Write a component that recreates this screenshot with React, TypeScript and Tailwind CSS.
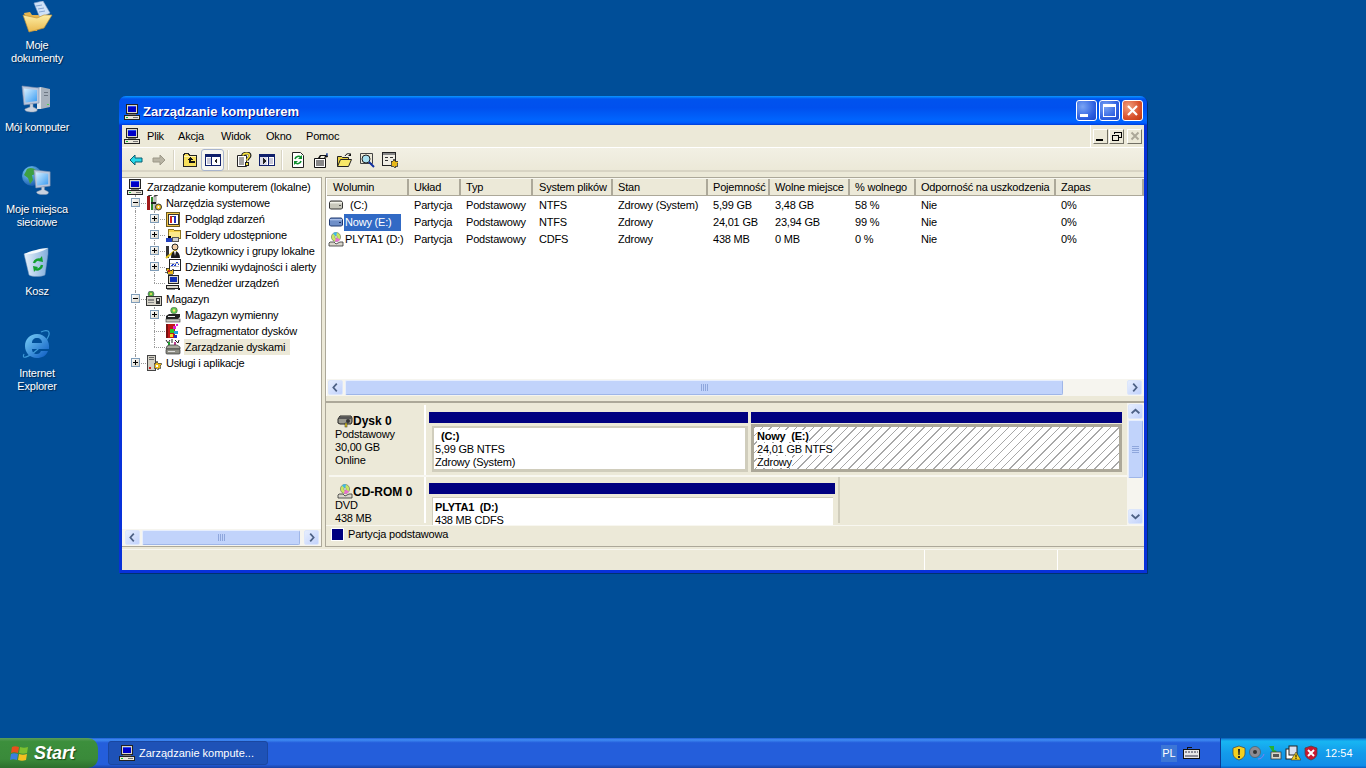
import React from 'react';

const Svg: React.FC<{ size?: number; box?: number; children: React.ReactNode; crisp?: boolean }> = ({ size = 16, box = 16, children, crisp }) => (
  <svg width={size} height={size} viewBox={`0 0 ${box} ${box}`} className="shrink-0" shapeRendering={crisp ? 'crispEdges' : undefined}>{children}</svg>
);

/* ---------- small 16px icons ---------- */
const ComputerIcon = () => (
  <Svg crisp>
    <rect x="2.5" y="0.5" width="11" height="9" fill="#d9d6cb" stroke="#222" />
    <rect x="4" y="2" width="8" height="6" fill="#0000c8" />
    <rect x="4" y="2" width="8" height="1" fill="#2b4cf0" />
    <rect x="4" y="10" width="8" height="1" fill="#777" />
    <rect x="0.5" y="11.5" width="15" height="4" fill="#e9e6da" stroke="#222" />
    <rect x="2" y="13" width="2" height="1" fill="#10c030" />
    <rect x="9" y="13" width="5" height="1" fill="#777" />
  </Svg>
);
const ToolsIcon = () => (
  <Svg>
    <rect x="1" y="1" width="3" height="14" fill="#a01818" />
    <rect x="5" y="2" width="2" height="13" fill="#2a8a2a" />
    <rect x="8" y="1" width="2" height="14" fill="#e8e8e8" stroke="#333" strokeWidth="0.5" />
    <path d="M2 1L6 0M8 1l4-1" stroke="#222" />
    <circle cx="12.5" cy="12" r="3" fill="#f0c020" stroke="#333" />
    <circle cx="12.5" cy="12" r="1" fill="#fff" />
    <rect x="5" y="7" width="5" height="2" fill="#222" />
  </Svg>
);
const EventIcon = () => (
  <Svg crisp>
    <rect x="1.5" y="1.5" width="13" height="14" fill="#f3c64a" stroke="#6b5a20" />
    <rect x="3.5" y="3.5" width="10" height="10" fill="#fff" stroke="#333" />
    <rect x="5" y="5" width="2" height="7" fill="#d02020" />
    <rect x="9" y="5" width="2" height="7" fill="#2030c0" />
    <rect x="7" y="5" width="2" height="1" fill="#444" />
  </Svg>
);
const SharedFolderIcon = () => (
  <Svg crisp>
    <path d="M3 2h5l1 1h6v8H3z" fill="#f4d24d" stroke="#8a7320" />
    <rect x="4" y="5" width="11" height="6" fill="#fbe88c" />
    <rect x="1" y="11" width="6" height="4" fill="#2040c0" />
    <rect x="7" y="10" width="6" height="4" fill="#d0d0d0" stroke="#555" />
    <rect x="3" y="9" width="3" height="2" fill="#000" />
  </Svg>
);
const UsersIcon = () => (
  <Svg>
    <rect x="1" y="3" width="3" height="12" fill="#333" />
    <path d="M1 15L12 6" stroke="#e8c820" strokeWidth="2" />
    <circle cx="10" cy="4" r="3" fill="#f2cfa8" stroke="#222" />
    <path d="M6 15c0-5 2-7 4-7s5 2 5 7z" fill="#1b1b1b" />
    <path d="M9 8l1 5 1-5z" fill="#fff" />
  </Svg>
);
const PerfIcon = () => (
  <Svg crisp>
    <rect x="4.5" y="0.5" width="11" height="11" fill="#fff" stroke="#222" />
    <path d="M6 8l2-3 2 2 2-4 2 3" fill="none" stroke="#2040d0" />
    <path d="M5 4h9M5 7h9" stroke="#bbb" />
    <path d="M0 13h3M1 9h3l2 3 2-2v5H3z" fill="#e8b818" stroke="#222" strokeWidth="0.7" />
    <circle cx="4" cy="12" r="1" fill="#d02020" />
  </Svg>
);
const DevMgrIcon = () => (
  <Svg crisp>
    <rect x="3.5" y="0.5" width="10" height="8" fill="#d9d6cb" stroke="#222" />
    <rect x="5" y="2" width="7" height="5" fill="#1030b8" />
    <rect x="1.5" y="10.5" width="12" height="3" fill="#d9d6cb" stroke="#222" />
    <path d="M13 13l2 2" stroke="#222" strokeWidth="2" />
    <rect x="2" y="14" width="8" height="1" fill="#888" />
  </Svg>
);
const StorageIcon = () => (
  <Svg>
    <circle cx="5" cy="3" r="3" fill="#58b040" stroke="#557" strokeWidth="0.6" />
    <circle cx="5" cy="3" r="1" fill="#f4e060" />
    <rect x="0.5" y="5.5" width="15" height="9" fill="#d8d5ca" stroke="#333" />
    <rect x="2" y="8" width="6" height="2" fill="#888" />
    <rect x="10" y="7" width="4" height="6" fill="#333" />
    <rect x="11" y="8" width="2" height="2" fill="#ddd" />
    <rect x="2" y="11" width="6" height="1" fill="#888" />
  </Svg>
);
const RemovableIcon = () => (
  <Svg>
    <circle cx="9" cy="3.5" r="3.3" fill="#60c850" stroke="#444" strokeWidth="0.5" />
    <circle cx="9" cy="3.5" r="1.2" fill="#f8e060" />
    <path d="M1 9l3-2h11v3l-2 2H1z" fill="#222" />
    <rect x="1" y="12" width="14" height="3" fill="#c8c8c0" stroke="#333" strokeWidth="0.6" />
    <rect x="3" y="9" width="7" height="1" fill="#eee" />
  </Svg>
);
const DefragIcon = () => (
  <Svg crisp>
    <rect x="1" y="1" width="9" height="14" fill="#c01818" />
    <rect x="1" y="1" width="2" height="14" fill="#781010" />
    <rect x="8" y="3" width="3" height="3" fill="#e020d0" />
    <rect x="11" y="1" width="2" height="2" fill="#e020d0" />
    <rect x="5" y="6" width="4" height="4" fill="#28c828" />
    <rect x="9" y="8" width="4" height="3" fill="#20a0e0" />
    <rect x="5" y="11" width="3" height="3" fill="#f0e020" />
    <rect x="9" y="12" width="3" height="3" fill="#2030c0" />
  </Svg>
);
const DiskMgmtIcon = () => (
  <Svg>
    <path d="M1 1l2 3 2-3M7 0v4M10 1l3 3M14 1l-1 3" stroke="#222" fill="none" />
    <rect x="3" y="3" width="2" height="3" fill="#20a030" />
    <rect x="9" y="3" width="2" height="3" fill="#c04090" />
    <path d="M2 7l3-1h7l3 2v2H1z" fill="#a8a89c" stroke="#333" strokeWidth="0.7" />
    <rect x="1" y="10" width="14" height="5" rx="1" fill="#8e8e84" stroke="#333" strokeWidth="0.7" />
    <rect x="3" y="12" width="7" height="1" fill="#ddd" />
  </Svg>
);
const ServicesIcon = () => (
  <Svg crisp>
    <rect x="1.5" y="0.5" width="8" height="15" fill="#d5d2c6" stroke="#444" />
    <rect x="3" y="2" width="5" height="1" fill="#666" />
    <rect x="3" y="4" width="5" height="1" fill="#666" />
    <rect x="3" y="12" width="2" height="2" fill="#d02020" />
    <path d="M8 8h2l1-2 1 2h3v2l-1 1 1 2h-2l-1 2-2-2H8l1-2z" fill="#e8b818" stroke="#444" strokeWidth="0.7" />
    <circle cx="11" cy="11" r="1" fill="#fff" />
  </Svg>
);
const DriveIcon: React.FC<{ selected?: boolean }> = ({ selected }) => (
  <Svg>
    <path d="M1.5 5l1-2h11l1 2v5l-1 1h-11l-1-1z" fill={selected ? '#6f8fc8' : '#c8c8bc'} stroke={selected ? '#203a70' : '#333'} />
    <rect x="2" y="4" width="12" height="1.4" fill={selected ? '#a7bde8' : '#f2f2ea'} />
    <rect x="11" y="7" width="2" height="1" fill={selected ? '#1c2f60' : '#555'} />
  </Svg>
);
const CdIcon = () => (
  <Svg>
    <circle cx="8" cy="5" r="4.6" fill="#c8e860" stroke="#666" strokeWidth="0.6" />
    <path d="M8 5L5 1.5A4.6 4.6 0 0 1 9 .5z" fill="#40b8e8" />
    <path d="M8 5l4 2.5A4.6 4.6 0 0 1 7 9.5z" fill="#e86fd0" />
    <circle cx="8" cy="5" r="1.2" fill="#fff" stroke="#666" strokeWidth="0.5" />
    <path d="M2 10h4l2 2 4-2h3v4H1v-3z" fill="#d8d5ca" stroke="#333" strokeWidth="0.8" />
  </Svg>
);
const HddBlackIcon = () => (
  <Svg>
    <path d="M1 6l2-3h11l1 2v4l-1 2H3l-2-1z" fill="#9a9a90" stroke="#222" />
    <rect x="2" y="4" width="12" height="2" fill="#555" />
    <circle cx="11" cy="8" r="2" fill="#333" />
    <rect x="8" y="10" width="2" height="4" fill="#e8d020" stroke="#222" strokeWidth="0.5" />
  </Svg>
);

/* ---------- toolbar icons ---------- */
const ArrowIcon: React.FC<{ dir: 'l' | 'r'; fill: string; stroke: string }> = ({ dir, fill, stroke }) => (
  <Svg size={14} box={14}>
    <path d={dir === 'l' ? 'M1 7l5-5v3h7v4H6v3z' : 'M13 7L8 2v3H1v4h7v3z'} fill={fill} stroke={stroke} />
  </Svg>
);
const UpFolderIcon = () => (
  <Svg crisp>
    <path d="M1.5 3.5l1-2h4l1 2h7v11h-13z" fill="#f7e05c" stroke="#222" />
    <path d="M8 5L5 8h2v3h6V9H9V8h2z" fill="#111" />
    <rect x="2" y="4" width="12" height="1" fill="#fdf3b0" />
  </Svg>
);
const TreeToggleIcon: React.FC<{ right?: boolean }> = ({ right }) => (
  <Svg crisp>
    <rect x="0.5" y="2.5" width="15" height="11" fill="#fff" stroke="#10206c" />
    <rect x="1" y="3" width="14" height="2" fill="#10206c" />
    <rect x={right ? 9 : 6} y="5" width="1" height="8" fill="#10206c" />
    <path d={right ? 'M4 6l3 3-3 3z' : 'M12 6l-3 3 3 3z'} fill="#222" />
    <rect x={right ? 10 : 2} y="6" width="4" height="6" fill="#c8c8d8" />
    {right && <rect x="1" y="5" width="7" height="8" fill="#dcdce8" />}
    {right && <path d="M4 6l3 3-3 3z" fill="#222" />}
  </Svg>
);
const HelpDocIcon = () => (
  <Svg>
    <path d="M1.5 3.5h9v11h-9z" fill="#fff" stroke="#222" />
    <path d="M3 6h5M3 8h5M3 10h5M3 12h5" stroke="#444" />
    <path d="M6.5 3.5C7 1 14-.5 14 3.5c0 2.2-2.7 2.4-2.7 5" fill="none" stroke="#222" strokeWidth="3" />
    <path d="M6.8 3.5C7.5 1.3 13.5 0 13.5 3.5c0 2.2-2.7 2.4-2.7 5" fill="none" stroke="#f6e23c" strokeWidth="1.6" />
    <rect x="9.5" y="10.5" width="3" height="3" fill="#f6e23c" stroke="#222" />
  </Svg>
);
const RefreshDocIcon = () => (
  <Svg>
    <path d="M2.5 0.5h8l3 3v12h-11z" fill="#fff" stroke="#222" />
    <path d="M5 7a3.5 3.5 0 0 1 6-1.5M11 9a3.5 3.5 0 0 1-6 1.5" fill="none" stroke="#109030" strokeWidth="1.6" />
    <path d="M12 3v4H8zM4 13V9h4z" fill="#109030" />
  </Svg>
);
const ExportIcon = () => (
  <Svg>
    <path d="M1.5 6.5h11v9h-11z" fill="#fff" stroke="#111" />
    <path d="M3 9h8M3 11h8M3 13h8" stroke="#111" />
    <path d="M5 6l2-3h6l1-2 1 4-4 1 1-2H8L7 6z" fill="#111" />
    <path d="M14 1v3" stroke="#2050c0" />
  </Svg>
);
const OpenFolderIcon = () => (
  <Svg>
    <path d="M1.5 14.5v-10h4l1 1h6v2" fill="#e8d040" stroke="#222" />
    <path d="M1.5 14.5l3-7h11l-3 7z" fill="#f8e868" stroke="#222" />
    <path d="M9 4c1-2 3-3 5-2" fill="none" stroke="#111" />
    <path d="M15 1v3h-3z" fill="#111" />
  </Svg>
);
const SearchDocIcon = () => (
  <Svg>
    <path d="M1.5 1.5h12v10h-12z" fill="#ece9d8" stroke="#444" />
    <circle cx="7" cy="7" r="4" fill="#a8e0f0" stroke="#222" />
    <path d="M10 10l5 5" stroke="#1030a0" strokeWidth="2" />
  </Svg>
);
const SettingsIcon = () => (
  <Svg crisp>
    <rect x="0.5" y="0.5" width="13" height="13" fill="#f0eee4" stroke="#222" />
    <rect x="1" y="1" width="12" height="2" fill="#888" />
    <path d="M3 5h3v1H3zM8 5h3v1H8zM3 8h3v1H3z" fill="#333" />
    <path d="M9 9h2l1-2 1 2h3v2l-1 1 1 2h-2l-1 2-2-2H9l1-2-1-1z" fill="#e8b818" stroke="#333" strokeWidth="0.8" />
  </Svg>
);

/* ---------- desktop icons ---------- */
const DocsDesktopIcon = () => (
  <Svg size={32} box={32}>
    <defs>
      <linearGradient id="fold" x1="0" y1="0" x2="0" y2="1"><stop offset="0" stopColor="#fdeea4" /><stop offset="1" stopColor="#eab84e" /></linearGradient>
    </defs>
    <path d="M3 12l6-1 2 3h9l-4 16H8z" fill="#e5b54e" />
    <path d="M13 2l9-2 7 12-10 5z" fill="#cfe2f8" stroke="#8aa6cc" strokeWidth="0.6" />
    <path d="M15 5l6-1M17 8l6-1M18 11l6-1" stroke="#86a6d2" />
    <path d="M8 31L2 14l14 3 7-3 8 0-8 13z" fill="url(#fold)" stroke="#c09238" strokeWidth="0.7" />
  </Svg>
);
const MonitorShape: React.FC<{ id: string; x?: number; y?: number }> = ({ id, x = 0, y = 0 }) => (
  <g transform={`translate(${x} ${y})`}>
    <defs>
      <linearGradient id={id} x1="0" y1="0" x2="1" y2="1"><stop offset="0" stopColor="#d8f0ff" /><stop offset="1" stopColor="#3a9cf2" /></linearGradient>
    </defs>
    <path d="M1 2l17 2v15L3 21z" fill="#b9c6dc" stroke="#7d8fae" strokeWidth="0.6" />
    <path d="M3 4.5l13 1.5v11L4.5 18.5z" fill={`url(#${id})`} />
    <path d="M9 20v3l-5 2c-1 2 3 3 7 3s6-1 5-3l-4-2v-3z" fill="#c9d2df" stroke="#8a96aa" strokeWidth="0.5" />
  </g>
);
const MyComputerIcon = () => (
  <Svg size={32} box={32}>
    <path d="M20 4l9 2v18l-9 2z" fill="#a8b2bd" />
    <path d="M20 4l-4 1 0 21 4 0z" fill="#dfe4ea" />
    <rect x="23" y="9" width="4" height="1" fill="#6e7884" />
    <rect x="23" y="12" width="4" height="1" fill="#6e7884" />
    <rect x="26" y="21" width="2" height="1" fill="#50d050" />
    <MonitorShape id="mon1" x={0} y={1} />
  </Svg>
);
const NetworkIcon = () => (
  <Svg size={32} box={32}>
    <defs>
      <radialGradient id="globe" cx="0.35" cy="0.3" r="0.8"><stop offset="0" stopColor="#7ed0f8" /><stop offset="1" stopColor="#0e4fa8" /></radialGradient>
    </defs>
    <circle cx="11" cy="11" r="10" fill="url(#globe)" />
    <path d="M6 4c3-2 7-1 9 1 1 3-2 5-4 5l1 5-3 4-2-6-4-3z" fill="#3ea042" />
    <g transform="translate(12 3) scale(0.95)"><MonitorShape id="mon2" /></g>
  </Svg>
);
const BinIcon = () => (
  <Svg size={32} box={32}>
    <defs>
      <linearGradient id="bin" x1="0" y1="0" x2="1" y2="0"><stop offset="0" stopColor="#e8f2fc" /><stop offset="1" stopColor="#82aedc" /></linearGradient>
    </defs>
    <path d="M3 7l24-6 0 6-3 21c-4 2-13 2-16 0z" fill="url(#bin)" stroke="#6d90b8" strokeWidth="0.5" />
    <path d="M3 7c6-3 18-6 24-6-6 4-18 7-24 6z" fill="#f5fafe" />
    <path d="M13 16a5 5 0 0 1 7-3M21 18a5 5 0 0 1-7 4" fill="none" stroke="#12a030" strokeWidth="2.4" />
    <path d="M21 9l1 6-5-1zM13 25l-1-6 5 1z" fill="#12a030" />
  </Svg>
);
const IeIcon = () => (
  <Svg size={32} box={32}>
    <defs>
      <linearGradient id="ie" x1="0" y1="0" x2="1" y2="1"><stop offset="0" stopColor="#7ad0f8" /><stop offset="1" stopColor="#0a58c0" /></linearGradient>
    </defs>
    <path d="M3 25C0 31 8 28 16 21 24 14 31 5 27 2c-2-1-5 0-7 1" fill="none" stroke="#3d9ad8" strokeWidth="1.2" />
    <path d="M16 5C9 5 4 10 4 17s5 12 12 12c5 0 9-2 11-7h-7c-1 2-2 3-4 3-3 0-5-2-5-5h17c1-8-4-15-12-15zm-5 9c0-3 2-5 5-5s5 2 5 5z" fill="url(#ie)" fillRule="evenodd" />
  </Svg>
);
const DesktopIcon: React.FC<{ icon: React.ReactNode; label: string[]; top: string }> = ({ icon, label, top }) => (
  <div className={`absolute left-0 w-[74px] flex flex-col items-center ${top}`}>
    {icon}
    <div className="mt-[6px] text-center text-white text-[11px] leading-[13px] [text-shadow:1px_1px_1px_#00244a] whitespace-nowrap">
      {label.map((l) => <div key={l}>{l}</div>)}
    </div>
  </div>
);

/* ---------- window parts ---------- */
const CaptionBtn: React.FC<{ kind: 'min' | 'max' | 'close' }> = ({ kind }) => (
  <div className={`w-[21px] h-[21px] rounded-[3px] border border-white flex items-center justify-center ${kind === 'close' ? 'bg-[radial-gradient(circle_at_30%_30%,#f0a080,#d8502c_60%,#c03810)]' : 'bg-[radial-gradient(circle_at_30%_30%,#7aa4f4,#2c5ee0_65%,#1a46c8)]'}`}>
    {kind === 'min' && <div className="w-[8px] h-[3px] bg-white mt-[9px] -ml-[5px]" />}
    {kind === 'max' && <div className="w-[13px] h-[13px] border border-white border-t-[3px]" />}
    {kind === 'close' && (
      <svg width="13" height="13" viewBox="0 0 13 13"><path d="M2 2l9 9M11 2l-9 9" stroke="#fff" strokeWidth="2.2" /></svg>
    )}
  </div>
);
const MdiBtn: React.FC<{ children: React.ReactNode }> = ({ children }) => (
  <div className="w-[15px] h-[15px] flex items-center justify-center border border-b-[#716f64] border-r-[#716f64] border-t-white border-l-white bg-[#ece9d8]">{children}</div>
);
const MenuItem: React.FC<{ label: string; w: string }> = ({ label, w }) => <span className={`${w} shrink-0`}>{label}</span>;
const ToolBtn: React.FC<{ children: React.ReactNode; active?: boolean }> = ({ children, active }) => (
  <div className={`w-[23px] h-[22px] flex items-center justify-center ${active ? 'bg-[#f7f6f0] border border-[#a8b4cc] rounded-[3px]' : ''}`}>{children}</div>
);
const ToolSep = () => (
  <div className="w-[8px] h-[20px] flex justify-center"><div className="w-[2px] h-full bg-[#d8d4c4] border-r border-white" /></div>
);

const ScrollBtn: React.FC<{ dir: 'l' | 'r' | 'u' | 'd' }> = ({ dir }) => {
  const d = { l: 'M9 3L5 7.5 9 12', r: 'M6 3l4 4.5L6 12', u: 'M3 9.5l4.5-4 4.5 4', d: 'M3 5.5l4.5 4 4.5-4' }[dir];
  return (
    <div className="w-[15px] h-[15px] shrink-0 rounded-[2px] border border-[#dce6fb] bg-[linear-gradient(135deg,#e6eefe,#c2d2fb)] flex items-center justify-center">
      <svg width="15" height="15" viewBox="0 0 15 15"><path d={d} fill="none" stroke="#4d6185" strokeWidth="2" /></svg>
    </div>
  );
};
const HThumbGrip = () => (
  <div className="flex gap-[1px]">
    {[0, 1, 2, 3].map((i) => <div key={i} className="w-[1px] h-[7px] bg-[#8ea6dc]" />)}
  </div>
);
const HScroll: React.FC<{ thumb: string; gap: string; left: string }> = ({ thumb, gap, left }) => (
  <div className={`h-[17px] flex items-center bg-[#f6f5ef] pr-[2px] shrink-0 ${left}`}>
    <ScrollBtn dir="l" />
    <div className={`${thumb} ml-[2px] h-[15px] rounded-[2px] border border-[#e6eefe] border-r-[#9fb6e8] border-b-[#9fb6e8] bg-[#c1d3fb] flex items-center justify-center`}><HThumbGrip /></div>
    <div className={gap} />
    <ScrollBtn dir="r" />
  </div>
);

/* ---------- tree ---------- */
type TreeNode = { label: string; icon: React.ReactNode; level: number; box?: '+' | '-'; last?: boolean; selected?: boolean };
const treeNodes: TreeNode[] = [
  { label: 'Zarządzanie komputerem (lokalne)', icon: <ComputerIcon />, level: 0 },
  { label: 'Narzędzia systemowe', icon: <ToolsIcon />, level: 1, box: '-' },
  { label: 'Podgląd zdarzeń', icon: <EventIcon />, level: 2, box: '+' },
  { label: 'Foldery udostępnione', icon: <SharedFolderIcon />, level: 2, box: '+' },
  { label: 'Użytkownicy i grupy lokalne', icon: <UsersIcon />, level: 2, box: '+' },
  { label: 'Dzienniki wydajności i alerty', icon: <PerfIcon />, level: 2, box: '+' },
  { label: 'Menedżer urządzeń', icon: <DevMgrIcon />, level: 2, last: true },
  { label: 'Magazyn', icon: <StorageIcon />, level: 1, box: '-' },
  { label: 'Magazyn wymienny', icon: <RemovableIcon />, level: 2, box: '+' },
  { label: 'Defragmentator dysków', icon: <DefragIcon />, level: 2 },
  { label: 'Zarządzanie dyskami', icon: <DiskMgmtIcon />, level: 2, last: true, selected: true },
  { label: 'Usługi i aplikacje', icon: <ServicesIcon />, level: 1, box: '+', last: true },
];

const ExpandBox: React.FC<{ sign: '+' | '-' }> = ({ sign }) => (
  <div className="absolute left-[4px] top-[3px] w-[9px] h-[9px] border border-[#7f9db9] bg-[linear-gradient(135deg,#ffffff,#d8d4c8)] flex items-center justify-center">
    <div className="relative w-[5px] h-[5px]">
      <div className="absolute left-0 top-[2px] w-[5px] h-[1px] bg-black" />
      {sign === '+' && <div className="absolute left-[2px] top-0 w-[1px] h-[5px] bg-black" />}
    </div>
  </div>
);

const TreeRow: React.FC<{ node: TreeNode }> = ({ node }) => (
  <div className="h-[16px] flex items-center whitespace-nowrap">
    {node.level === 2 && (
      <div className="relative w-[19px] h-[16px] shrink-0"><div className="absolute left-[8px] top-0 h-[16px] border-l border-dotted border-[#9a9a9a]" /></div>
    )}
    {node.level > 0 && (
      <div className="relative w-[19px] h-[16px] shrink-0">
        <div className={`absolute left-[8px] top-0 border-l border-dotted border-[#9a9a9a] ${node.last ? 'h-[8px]' : 'h-[16px]'}`} />
        <div className="absolute left-[8px] top-[8px] w-[11px] border-t border-dotted border-[#9a9a9a]" />
        {node.box && <ExpandBox sign={node.box} />}
      </div>
    )}
    <div className="w-[16px] h-[16px] shrink-0">{node.icon}</div>
    <span className={`ml-[3px] h-[16px] pl-[1px] leading-[16px] ${node.selected ? 'bg-[#ece9d8] pr-[5px]' : 'pr-[1px]'}`}>{node.label}</span>
  </div>
);

/* ---------- volume list ---------- */
const columns = [
  { label: 'Wolumin', w: 'w-[81px]', pad: 'pl-[5px]' },
  { label: 'Układ', w: 'w-[52px]', pad: 'pl-[5px]' },
  { label: 'Typ', w: 'w-[72px]', pad: 'pl-[5px]' },
  { label: 'System plików', w: 'w-[80px]', pad: 'pl-[6px]' },
  { label: 'Stan', w: 'w-[95px]', pad: 'pl-[5px]' },
  { label: 'Pojemność', w: 'w-[62px]', pad: 'pl-[5px]' },
  { label: 'Wolne miejsce', w: 'w-[80px]', pad: 'pl-[5px]' },
  { label: '% wolnego', w: 'w-[66px]', pad: 'pl-[5px]' },
  { label: 'Odporność na uszkodzenia', w: 'w-[140px]', pad: 'pl-[5px]' },
  { label: 'Zapas', w: 'flex-1', pad: 'pl-[5px]' },
];
const rows = [
  ['Partycja', 'Podstawowy', 'NTFS', 'Zdrowy (System)', '5,99 GB', '3,48 GB', '58 %', 'Nie', '0%'],
  ['Partycja', 'Podstawowy', 'NTFS', 'Zdrowy', '24,01 GB', '23,94 GB', '99 %', 'Nie', '0%'],
  ['Partycja', 'Podstawowy', 'CDFS', 'Zdrowy', '438 MB', '0 MB', '0 %', 'Nie', '0%'],
];
const volumes: { icon: React.ReactNode; name: string; selected?: boolean; indent?: boolean }[] = [
  { icon: <DriveIcon />, name: '(C:)', indent: true },
  { icon: <DriveIcon selected />, name: 'Nowy (E:)', selected: true },
  { icon: <CdIcon />, name: 'PLYTA1 (D:)' },
];

const PartitionHead: React.FC<{ w: string; children: React.ReactNode }> = ({ w, children }) => (
  <div className={`${w} flex flex-col h-[70px] shrink-0 pt-[7px]`}>
    <div className="h-[11px] bg-[#000080]" />
    {children}
  </div>
);

export default function App() {
  return (
    <div className="relative w-[1366px] h-[768px] overflow-hidden flex flex-col bg-[#004e98] font-['Liberation_Sans','Noto_Sans_CJK_SC',sans-serif] text-[11px] leading-[13px] tracking-[-0.2px] text-black">
      <div className="relative flex-1">
        <DesktopIcon top="top-[1px]" icon={<DocsDesktopIcon />} label={['Moje', 'dokumenty']} />
        <DesktopIcon top="top-[83px]" icon={<MyComputerIcon />} label={['Mój komputer']} />
        <DesktopIcon top="top-[165px]" icon={<NetworkIcon />} label={['Moje miejsca', 'sieciowe']} />
        <DesktopIcon top="top-[247px]" icon={<BinIcon />} label={['Kosz']} />
        <DesktopIcon top="top-[329px]" icon={<IeIcon />} label={['Internet', 'Explorer']} />

        {/* window */}
        <div className="absolute left-[119px] top-[96px] w-[1028px] h-[477px] flex flex-col rounded-t-[7px] bg-[#0831d9] px-[3px] pb-[3px] shadow-[1px_1px_0_#003070]">
          <div className="-mx-[3px] h-[29px] shrink-0 rounded-t-[7px] flex items-center pl-[5px] pr-[4px] bg-[linear-gradient(180deg,#0997ff_0%,#0053ee_10%,#0050ee_40%,#0066ff_85%,#005bff_93%,#003dd7_100%)]">
            <div className="mt-[3px] flex items-center">
              <ComputerIcon />
              <span className="ml-[3px] text-white font-bold text-[13px] leading-[16px] tracking-normal [text-shadow:1px_1px_0_#0f1089]">Zarządzanie komputerem</span>
            </div>
            <div className="ml-auto flex gap-[2px]">
              <CaptionBtn kind="min" />
              <CaptionBtn kind="max" />
              <CaptionBtn kind="close" />
            </div>
          </div>

          <div className="flex-1 flex flex-col bg-[#ece9d8] min-h-0">
            {/* menu bar */}
            <div className="h-[23px] shrink-0 flex items-center pl-[2px] border-b border-white">
              <ComputerIcon />
              <div className="ml-[7px] flex">
                <MenuItem label="Plik" w="w-[31px]" />
                <MenuItem label="Akcja" w="w-[43px]" />
                <MenuItem label="Widok" w="w-[45px]" />
                <MenuItem label="Okno" w="w-[40px]" />
                <MenuItem label="Pomoc" w="w-[40px]" />
              </div>
              <div className="ml-auto h-full flex items-center border-l border-white pl-[2px] pr-[2px]">
                <MdiBtn><div className="w-[7px] h-[2px] bg-black mt-[7px] -ml-[2px]" /></MdiBtn>
                <div className="w-[1px]" />
                <MdiBtn>
                  <svg width="11" height="11" viewBox="0 0 11 11" shapeRendering="crispEdges"><path d="M3 1.5h7v5H8M3 1.5V3M1.5 4.5h6v5h-6z" fill="none" stroke="#000" /><path d="M3 1h7v1H3zM1 4h7v1H1z" /></svg>
                </MdiBtn>
                <div className="w-[3px]" />
                <MdiBtn>
                  <svg width="10" height="10" viewBox="0 0 10 10"><path d="M1.5 1.5l7 7M8.5 1.5l-7 7" stroke="#aca899" strokeWidth="2" /></svg>
                </MdiBtn>
              </div>
            </div>

            {/* toolbar */}
            <div className="h-[24px] shrink-0 flex items-center pl-[2px] pt-[2px] border-b-2 border-[#d8d4c4] bg-[linear-gradient(180deg,#f2f0e4,#ece9d8)]">
              <ToolBtn><ArrowIcon dir="l" fill="#28d8e8" stroke="#0a5f70" /></ToolBtn>
              <ToolBtn><ArrowIcon dir="r" fill="#b8b4a4" stroke="#9c9888" /></ToolBtn>
              <ToolSep />
              <ToolBtn><UpFolderIcon /></ToolBtn>
              <ToolBtn active><TreeToggleIcon /></ToolBtn>
              <ToolSep />
              <ToolBtn><HelpDocIcon /></ToolBtn>
              <ToolBtn><TreeToggleIcon right /></ToolBtn>
              <ToolSep />
              <ToolBtn><RefreshDocIcon /></ToolBtn>
              <ToolBtn><ExportIcon /></ToolBtn>
              <ToolBtn><OpenFolderIcon /></ToolBtn>
              <ToolBtn><SearchDocIcon /></ToolBtn>
              <ToolBtn><SettingsIcon /></ToolBtn>
            </div>

            {/* content */}
            <div className="mt-[5px] h-[370px] shrink-0 flex gap-[3px]">
              <div className="w-[200px] shrink-0 flex flex-col bg-white border-t border-r border-b border-[#aca899]">
                <div className="flex-1 pl-[5px] pt-[1px] overflow-hidden">
                  {treeNodes.map((n) => <TreeRow key={n.label} node={n} />)}
                </div>
                <HScroll left="pl-[3px]" thumb="w-[158px]" gap="w-[4px]" />
              </div>

              <div className="flex-1 min-w-0 flex flex-col border-l border-t border-[#aca899]">
                {/* list */}
                <div className="h-[218px] shrink-0 flex flex-col bg-white border-l border-white">
                  <div className="h-[18px] shrink-0 flex pl-[1px] bg-[#ece9d8] border-b border-[#aca899] border-t border-t-[#f8f7f0]">
                    {columns.map((c) => (
                      <div key={c.label} className={`${c.w} ${c.pad} shrink-0 h-full flex items-center whitespace-nowrap border-r-2 border-r-[#aca899]`}>{c.label}</div>
                    ))}
                  </div>
                  <div className="flex-1 min-h-0 pt-[1px]">
                    {rows.map((r, i) => (
                      <div key={i} className="h-[17px] flex items-center pl-[1px]">
                        <div className="w-[81px] shrink-0 flex items-center">
                          <div className="w-[16px] h-[16px] shrink-0">{volumes[i].icon}</div>
                          <span className={`h-[17px] leading-[17px] pl-[1px] whitespace-nowrap ${volumes[i].selected ? 'bg-[#316ac5] text-white pr-[10px]' : ''} ${volumes[i].indent ? 'ml-[5px]' : ''}`}>{volumes[i].name}</span>
                        </div>
                        {r.map((cell, j) => (
                          <div key={j} className={`${columns[j + 1].w} ${columns[j + 1].pad} shrink-0 whitespace-nowrap`}>{cell}</div>
                        ))}
                      </div>
                    ))}
                  </div>
                  <HScroll left="pl-[1px]" thumb="w-[718px]" gap="flex-1" />
                </div>
                <div className="h-[7px] shrink-0 border-b-2 border-[#aca899]" />

                {/* disks */}
                <div className="h-[122px] shrink-0 flex overflow-hidden">
                  <div className="flex-1 min-w-0 pl-[3px] pt-[2px] overflow-hidden">
                    <div className="h-[72px] flex border-b-2 border-[#f8f7f0]">
                      <div className="w-[97px] shrink-0 border-r-2 border-white pl-[6px] pt-[8px]">
                        <div className="flex items-center h-[16px] font-bold text-[12px] tracking-normal ml-[2px]"><HddBlackIcon /><span>Dysk 0</span></div>
                        <div className="-mt-[1px]">Podstawowy</div>
                        <div>30,00 GB</div>
                        <div>Online</div>
                      </div>
                      <div className="ml-[3px] flex gap-[3px]">
                        <PartitionHead w="w-[319px]">
                          <div className="mt-[3px] ml-[3px] h-[46px] bg-white border-t-2 border-l-2 border-r-[3px] border-b-[3px] border-[#d0cdbc] pl-[1px] pt-[2px] whitespace-nowrap">
                            <div className="font-bold ml-[6px]">(C:)</div>
                            <div>5,99 GB NTFS</div>
                            <div>Zdrowy (System)</div>
                          </div>
                        </PartitionHead>
                        <PartitionHead w="w-[371px]">
                          <div className="h-[48px] mt-[1px] bg-[#aca899] p-[3px]">
                            <div className="h-[42px] pl-[3px] pt-[3px] bg-[repeating-linear-gradient(135deg,#a8a8a8_0,#a8a8a8_1px,#ffffff_1px,#ffffff_6px)]">
                              <div className="font-bold"><span className="bg-white">Nowy&nbsp;&nbsp;(E:)</span></div>
                              <div><span className="bg-white">24,01 GB NTFS</span></div>
                              <div><span className="bg-white">Zdrowy</span></div>
                            </div>
                          </div>
                        </PartitionHead>
                      </div>
                    </div>
                    <div className="h-[46px] flex">
                      <div className="w-[97px] shrink-0 border-r-2 border-white pl-[6px] pt-[7px]">
                        <div className="flex items-center h-[16px] font-bold text-[12px] tracking-normal ml-[2px]"><CdIcon /><span>CD-ROM 0</span></div>
                        <div className="-mt-[1px]">DVD</div>
                        <div>438 MB</div>
                      </div>
                      <div className="ml-[3px] w-[411px] pt-[6px] border-r-2 border-[#d0cdbc] pr-[3px]">
                        <div className="h-[11px] w-[406px] bg-[#000080]" />
                        <div className="mt-[3px] ml-[3px] mr-[2px] h-[40px] bg-white border-t border-l border-[#d0cdbc] pl-[2px] pt-[3px] whitespace-nowrap">
                          <div className="font-bold">PLYTA1&nbsp;&nbsp;(D:)</div>
                          <div>438 MB CDFS</div>
                        </div>
                      </div>
                    </div>
                  </div>
                  <div className="w-[17px] shrink-0 pl-[1px] pt-[1px] pb-[1px] flex flex-col bg-[#f6f5ef]">
                    <ScrollBtn dir="u" />
                    <div className="h-[58px] w-[15px] mt-[1px] rounded-[2px] border border-[#e6eefe] border-r-[#9fb6e8] border-b-[#9fb6e8] bg-[#c1d3fb] flex flex-col items-center justify-center gap-[1px]">
                      {[0, 1, 2, 3].map((i) => <div key={i} className="w-[7px] h-[1px] bg-[#8ea6dc]" />)}
                    </div>
                    <div className="flex-1" />
                    <ScrollBtn dir="d" />
                  </div>
                </div>

                {/* legend */}
                <div className="flex-1 flex items-center pl-[5px] pb-[3px] border-t border-[#f8f7f0] border-b border-b-[#aca899]">
                  <div className="w-[11px] h-[11px] bg-[#000080] border border-white box-content" />
                  <span className="ml-[4px]">Partycja podstawowa</span>
                </div>
              </div>
            </div>

            {/* status bar */}
            <div className="mt-[2px] flex-1 flex border-t border-[#f8f7f0]">
              <div className="w-[803px] border-r border-white" />
              <div className="w-[133px] border-r border-white" />
              <div className="flex-1" />
            </div>
          </div>
        </div>
      </div>

      {/* taskbar */}
      <div className="h-[30px] shrink-0 flex items-center bg-[linear-gradient(180deg,#1f5fd8_0%,#3f8cf3_6%,#245edb_16%,#245edb_88%,#1941a5_100%)]">
        <div className="w-[98px] h-full shrink-0 flex items-center rounded-r-[10px] pl-[10px] bg-[linear-gradient(180deg,#5a9e5a_0%,#3c8f3c_12%,#3a8a3a_70%,#2c6f2c_100%)]">
          <svg width="20" height="20" viewBox="0 0 20 20" className="shrink-0">
            <path d="M2 4c2-1 4-1 7 0l-1 6c-3-1-5-1-7 0z" fill="#e8501c" />
            <path d="M10 4c3 1 5 1 8 0l-1 6c-3 1-5 1-8 0z" fill="#7cc030" />
            <path d="M1 11c2-1 4-1 7 0l-1 6c-3-1-5-1-7 0z" fill="#3c7ee0" />
            <path d="M9 11c3 1 5 1 8 0l-1 6c-3 1-5 1-8 0z" fill="#f4c020" />
          </svg>
          <span className="ml-[4px] text-white font-bold italic text-[18px] leading-[22px] tracking-normal [text-shadow:1px_1px_1px_#1a4a1a]">Start</span>
        </div>
        <div className="ml-[10px] w-[160px] h-[24px] shrink-0 flex items-center pl-[10px] rounded-[3px] bg-[#1e52b7] border border-[#1a47a0] text-white whitespace-nowrap tracking-normal">
          <ComputerIcon />
          <span className="ml-[4px]">Zarządzanie kompute...</span>
        </div>

        <div className="ml-auto h-full flex items-center">
          <span className="w-[16px] h-[17px] bg-[#3c76d6] text-white text-center leading-[17px] text-[11px] tracking-normal">PL</span>
          <div className="ml-[6px] mr-[20px]">
            <svg width="17" height="14" viewBox="0 0 17 14" shapeRendering="crispEdges">
              <path d="M4 3V1h5" fill="none" stroke="#111" />
              <rect x="0.5" y="3.5" width="16" height="9" fill="#e8e8e8" stroke="#111" />
              <path d="M2 5h2v2H2zM5 5h2v2H5zM8 5h2v2H8zM11 5h2v2h-2zM14 5h1v2h-1zM2 9h13v2H2z" fill="#8c8c98" />
            </svg>
          </div>
          <div className="h-full w-[146px] flex items-center pl-[10px] border-l border-[#0d3a94] bg-[linear-gradient(180deg,#0c59b9_0%,#139ee9_6%,#18b5f2_12%,#139beb_50%,#1290e8_85%,#0d8dea_92%,#0c5ec0_100%)]">
            <div className="flex gap-[2px] items-center">
              <svg width="16" height="16" viewBox="0 0 16 16"><path d="M8 1l6 2v5c0 4-3 6-6 7-3-1-6-3-6-7V3z" fill="#f4d020" stroke="#444" strokeWidth="0.7" /><path d="M7 4h2l-.4 6H7.4zM7 11h2v2H7z" fill="#222" /></svg>
              <svg width="16" height="16" viewBox="0 0 16 16"><circle cx="6" cy="7" r="5.5" fill="#8c8c94" stroke="#444" strokeWidth="0.5" /><circle cx="6" cy="7" r="2" fill="#333" /><path d="M9 14c3 0 5-2 6-5" stroke="#8080f0" fill="none" /></svg>
              <svg width="16" height="16" viewBox="0 0 16 16"><path d="M2 1h5v4l3 1-3 3z" fill="#28b030" /><rect x="4" y="7" width="10" height="7" fill="#d8d8cc" stroke="#333" strokeWidth="0.7" /><rect x="6" y="9" width="6" height="3" fill="#555" /></svg>
              <svg width="16" height="16" viewBox="0 0 16 16"><rect x="1" y="4" width="9" height="10" fill="#fff" stroke="#222" /><rect x="4" y="1" width="8" height="9" fill="#d8e0f0" stroke="#222" /><path d="M11 7l5 8H6z" fill="#f4d020" stroke="#333" strokeWidth="0.6" /><path d="M10.5 9.5h1v3h-1zM10.5 13h1v1h-1z" fill="#000" /></svg>
              <svg width="16" height="16" viewBox="0 0 16 16"><path d="M8 1l6 2v5c0 4-3 6-6 7-3-1-6-3-6-7V3z" fill="#c81830" stroke="#444" strokeWidth="0.7" /><path d="M5 5l6 6M11 5l-6 6" stroke="#fff" strokeWidth="2" /></svg>
            </div>
            <span className="ml-[6px] text-white tracking-normal">12:54</span>
          </div>
        </div>
      </div>
    </div>
  );
}
